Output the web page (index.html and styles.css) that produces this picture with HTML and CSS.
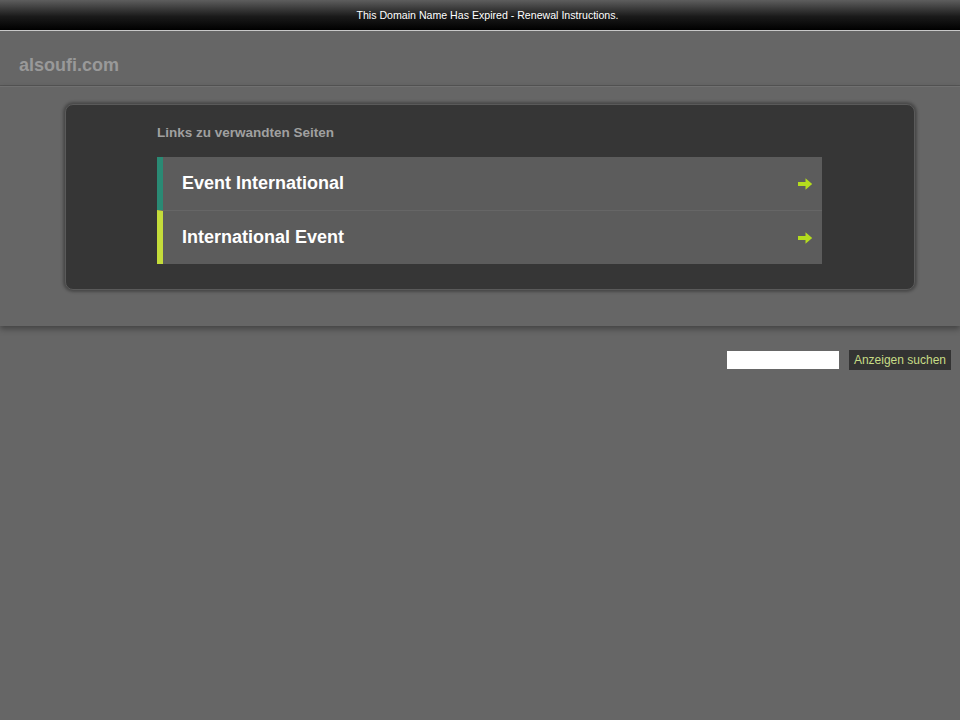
FILE: index.html
```html
<!DOCTYPE html>
<html lang="de">
<head>
    <meta charset="UTF-8">
    <title>alsoufi.com</title>
    <link rel="stylesheet" href="styles.css">
</head>
<body>
    <div class="topbar">
        <a href="#">This Domain Name Has Expired - Renewal Instructions.</a>
    </div>

    <div class="header">
        <h1 class="domain">alsoufi.com</h1>
    </div>

    <div class="main">
        <div class="box">
            <h2 class="titel">Links zu verwandten Seiten</h2>
            <ul class="links">
                <li class="link link-1">
                    <a href="#">Event International</a>
                    <svg class="pfeil" width="16" height="14" viewBox="0 0 16 14"><path d="M1 5h7.5V1.2L15.2 7l-6.7 5.8V9H1z" fill="#b4dc1e"/></svg>
                </li>
                <li class="link link-2">
                    <a href="#">International Event</a>
                    <svg class="pfeil" width="16" height="14" viewBox="0 0 16 14"><path d="M1 5h7.5V1.2L15.2 7l-6.7 5.8V9H1z" fill="#b4dc1e"/></svg>
                </li>
            </ul>
        </div>
    </div>

    <div class="suche">
        <input type="text" class="suche-feld">
        <button class="suche-btn">Anzeigen suchen</button>
    </div>
</body>
</html>
```

FILE: styles.css
```css
body {
    margin: 0;
    background-color: #666;
    font-family: "Liberation Sans", Arial, sans-serif;
}

/* Balken oben */
.topbar {
    height: 30px;
    background: linear-gradient(to bottom, #5e5e5e 0%, #1a1a1a 55%, #000 100%);
    border-bottom: 1px solid #c8c8c8;
    display: flex;
    justify-content: center;
    align-items: center;
    padding-left: 15px;
}

.topbar a {
    color: #fff;
    font-size: 10.6px;
    text-decoration: none;
}

.header {
    height: 54px;
    border-bottom: 1px solid #555;
    display: flex;
    align-items: flex-end;
    padding-left: 19px;
}

.domain {
    margin: 0 0 9px 0;
    font-size: 18px;
    font-weight: bold;
    color: #999;
}

.main {
    border-top: 1px solid #707070;
    padding: 17px 45px 36px 65px;
    box-shadow: 0 3px 6px rgba(0,0,0,0.35);
    position: relative;
}

.box {
    background-color: #363636;
    border: 1px solid #5a5a5a;
    border-radius: 8px;
    box-shadow: 0 0 3px 2px rgba(0,0,0,0.3);
    padding: 20px 92px 25px 91px;
}

.titel {
    margin: 0 0 17px 0;
    font-size: 13.5px;
    font-weight: bold;
    color: #a0a0a0;
}

.links {
    list-style: none;
    margin: 0;
    padding: 0;
}

.link {
    height: 53px;
    background-color: #5c5c5c;
    border-left: 6px solid #2a8a74;
    display: flex;
    align-items: center;
    justify-content: space-between;
    padding: 0 9px 0 19px;
}

.link-2 {
    border-left-color: #c4dc3a;
    border-top: 1px solid #666;
}

.link a {
    color: #fff;
    font-size: 18px;
    font-weight: bold;
    text-decoration: none;
}

.suche {
    display: flex;
    justify-content: flex-end;
    align-items: center;
    gap: 10px;
    padding: 24px 9px 0 0;
}

.suche-feld {
    width: 112px;
    height: 18px;
    border: none;
    padding: 0;
    background-color: #fff;
}

.suche-btn {
    background-color: #333;
    border: none;
    color: #c7dc86;
    font-family: "Liberation Sans", Arial, sans-serif;
    font-size: 12px;
    height: 20px;
    padding: 0 5px;
}
```
